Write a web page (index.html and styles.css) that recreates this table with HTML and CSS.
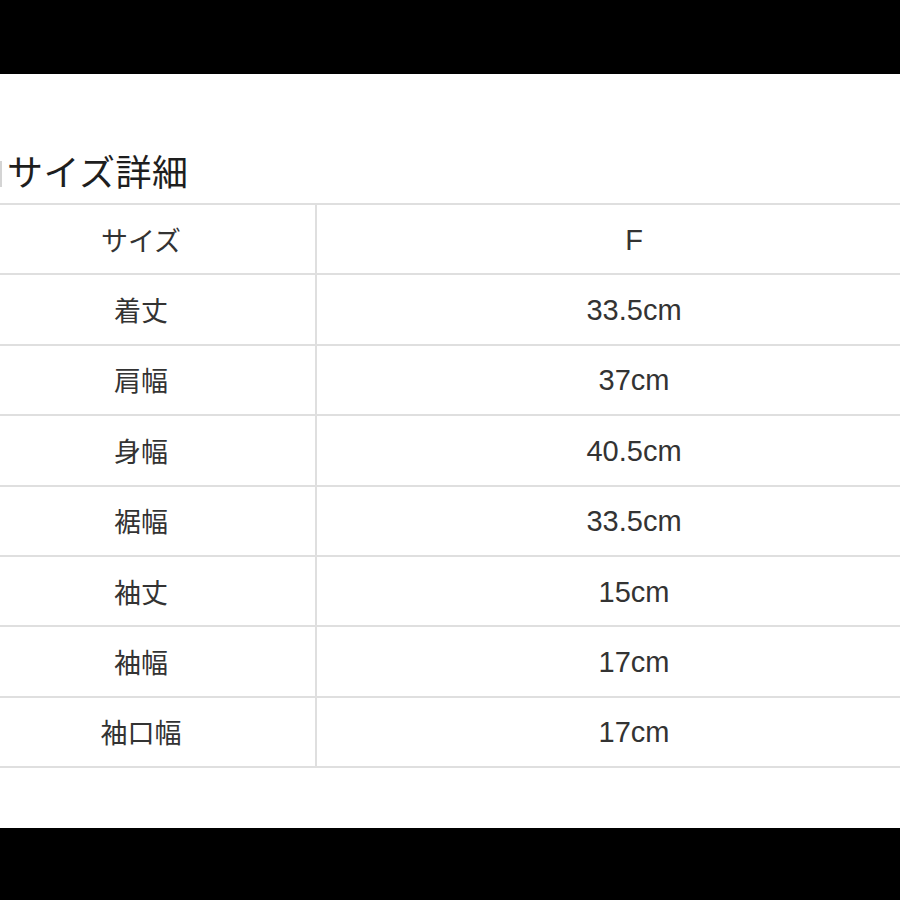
FILE: index.html
```html
<!DOCTYPE html>
<html lang="ja">
<head>
<meta charset="utf-8">
<title>サイズ詳細</title>
<link rel="stylesheet" href="styles.css">
</head>
<body>
<div class="frame">
  <div class="sheet">
    <h2 class="title"><span class="cut"></span>サイズ詳細</h2>
    <div class="size-table">
      <div class="cell label">サイズ</div><div class="cell value">F</div>
      <div class="cell label">着丈</div><div class="cell value">33.5cm</div>
      <div class="cell label">肩幅</div><div class="cell value">37cm</div>
      <div class="cell label">身幅</div><div class="cell value">40.5cm</div>
      <div class="cell label">裾幅</div><div class="cell value">33.5cm</div>
      <div class="cell label">袖丈</div><div class="cell value">15cm</div>
      <div class="cell label">袖幅</div><div class="cell value">17cm</div>
      <div class="cell label">袖口幅</div><div class="cell value">17cm</div>
    </div>
  </div>
</div>
</body>
</html>
```
FILE: styles.css
```css
html, body {
  margin: 0;
  padding: 0;
  background: #000;
}
.frame {
  width: 900px;
  height: 900px;
  padding-top: 74px;
  box-sizing: border-box;
  overflow: hidden;
}
.sheet {
  height: 754px;
  background: #fff;
  overflow: hidden;
  padding-top: 80px;
  box-sizing: border-box;
  font-family: "Liberation Sans", "Noto Sans CJK JP", sans-serif;
}
.title {
  margin: 0;
  height: 40px;
  line-height: 40px;
  font-size: 36px;
  font-weight: normal;
  color: #1e1e1e;
  display: flex;
  align-items: center;
  gap: 5px;
  letter-spacing: 0.5px;
}
.cut {
  display: block;
  width: 2px;
  height: 26px;
  background: #d4d4d4;
}
.size-table {
  margin-top: 9px;
  margin-left: -33px;
  width: 984px;
  display: grid;
  grid-template-columns: 350px 634px;
  border-top: 2px solid #dfdfdf;
}
.cell {
  box-sizing: border-box;
  height: 70.4px;
  border-bottom: 2px solid #dfdfdf;
  display: flex;
  align-items: center;
  justify-content: center;
  font-size: 27px;
  color: #333;
}
.label {
  border-right: 2px solid #dfdfdf;
}
.value {
  font-size: 29px;
  padding-top: 2px;
}
```
